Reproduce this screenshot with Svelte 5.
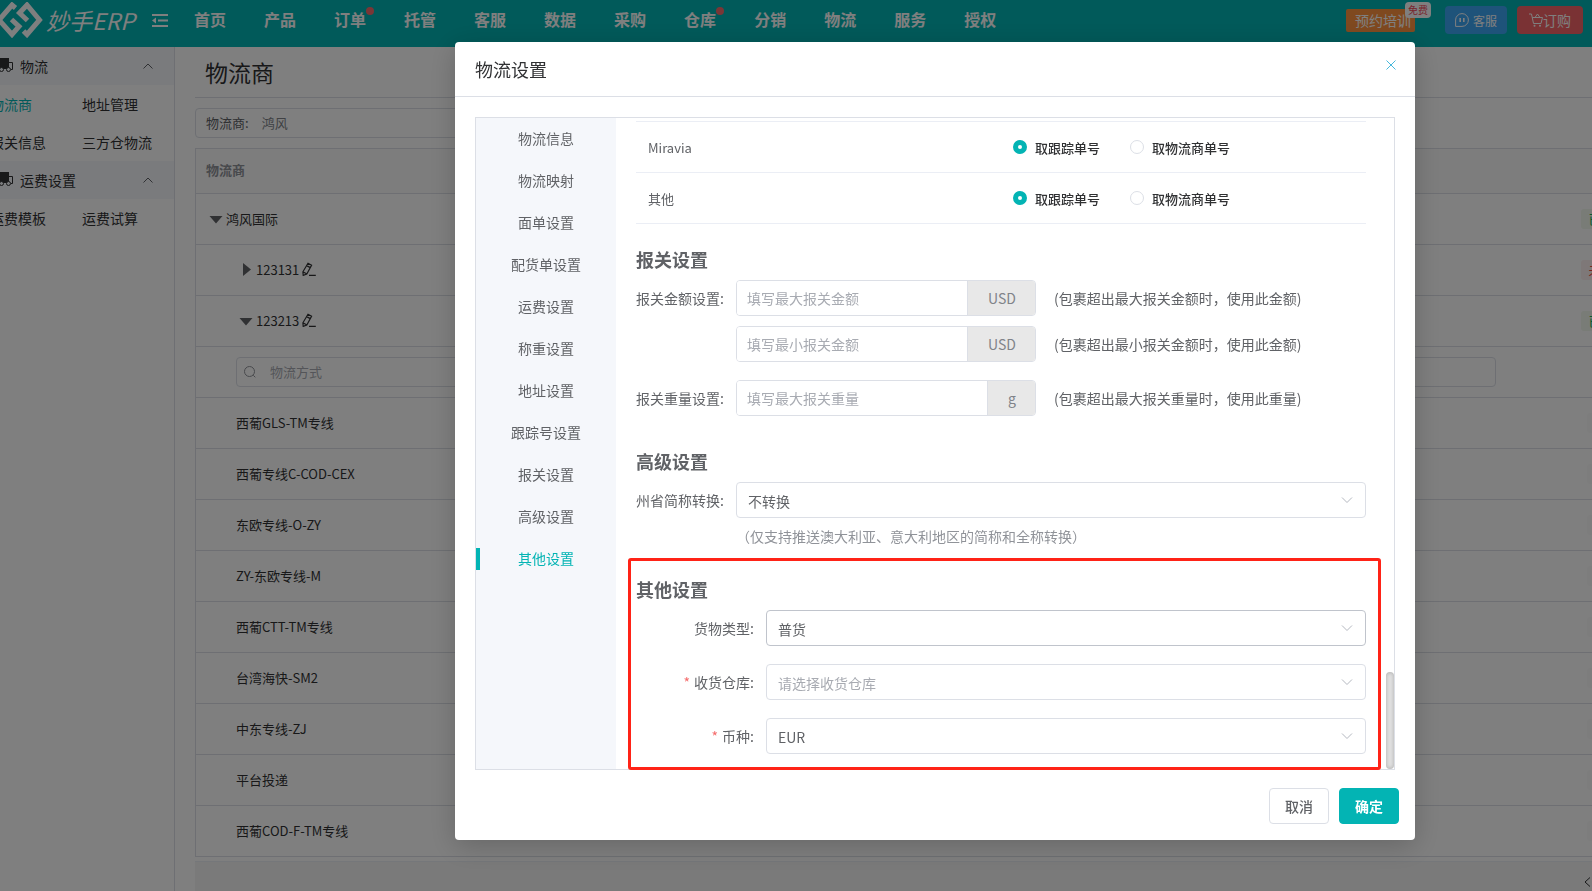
<script>
  const navs = [
    { name: '首页' },
    { name: '产品' },
    { name: '订单', dot: true },
    { name: '托管' },
    { name: '客服' },
    { name: '数据' },
    { name: '采购' },
    { name: '仓库', dot: true },
    { name: '分销' },
    { name: '物流' },
    { name: '服务' },
    { name: '授权' }
  ]

  const menus = [
    { title: '物流', items: ['物流商', '地址管理', '报关信息', '三方仓物流'] },
    { title: '运费设置', items: ['运费模板', '运费试算'] }
  ]

  const methods = [
    '西葡GLS-TM专线',
    '西葡专线C-COD-CEX',
    '东欧专线-O-ZY',
    'ZY-东欧专线-M',
    '西葡CTT-TM专线',
    '台湾海快-SM2',
    '中东专线-ZJ',
    '平台投递',
    '西葡COD-F-TM专线'
  ]

  const tabs = [
    '物流信息',
    '物流映射',
    '面单设置',
    '配货单设置',
    '运费设置',
    '称重设置',
    '地址设置',
    '跟踪号设置',
    '报关设置',
    '高级设置',
    '其他设置'
  ]

  let activeTab = $state('其他设置')
  let visible = $state(true)
  let platforms = $state([
    { name: 'Miravia', value: 'track' },
    { name: '其他', value: 'track' }
  ])
  let form = $state({
    maxAmount: '',
    minAmount: '',
    maxWeight: '',
    province: '不转换',
    goods: '普货',
    warehouse: '',
    currency: 'EUR'
  })

  const close = () => {
    visible = false
  }
</script>

{#snippet arrow()}
  <svg class="arrow" width="12" height="12" viewBox="0 0 12 12" aria-hidden="true">
    <path d="M1 3.5l5 5 5-5" fill="none" stroke="#b4b8c0" />
  </svg>
{/snippet}

{#snippet caret(open)}
  <svg class="caret" width="14" height="14" viewBox="0 0 14 14" aria-hidden="true">
    <path d={open ? 'M.5 5h13l-6.500 7.500z' : 'M4 1v13l8-6.500z'} fill="#606266" />
  </svg>
{/snippet}

{#snippet pen()}
  <svg class="pen" width="14" height="14" viewBox="0 0 14 14" aria-hidden="true">
    <path d="M6 1.2l3.6 2L4.8 12 1.2 13.4.9 9.8zM4.6 3.6l3.7 2M.9 9.8l3.6 2M7 13.3h6.8" fill="none" stroke="#303133" stroke-width="1.2" />
  </svg>
{/snippet}

<div class="page">
  <header class="header">
    <a class="logo" href="#home" aria-label="妙手ERP">
      <svg width="43" height="36" viewBox="0 0 43 36" aria-hidden="true">
        <path d="M15.500 6L12 3-1 18l13 14.500 7-8-7.500-7" fill="none" stroke="#fff" stroke-width="5" />
        <path d="M23.500 29l3.500 3.500L39.500 18 27 3l-7.500 8 8 7.500" fill="none" stroke="#fff" stroke-width="5" />
      </svg>
      <span>妙手ERP</span>
    </a>
    <button class="fold" aria-label="收起菜单">
      <svg width="16" height="13" viewBox="0 0 16 13" aria-hidden="true">
        <path d="M0 1h16M6 6.500h10M0 12h16" stroke="#fff" stroke-width="2" />
        <path d="M4 3.500v6L0 6.500z" fill="#fff" />
      </svg>
    </button>
    <nav class="nav">
      {#each navs as nav}
        <a href="#nav">{nav.name}{#if nav.dot}<i class="dot"></i>{/if}</a>
      {/each}
    </nav>
    <div class="actions">
      <button class="train">预约培训<span class="free">免费</span></button>
      <button class="service">
        <svg width="14" height="14" viewBox="0 0 14 14" aria-hidden="true">
          <path d="M.6 13.400V7A6.400 6.400 0 1 1 7 13.400z" fill="none" stroke="#fff" />
          <path d="M5.200 5v4M8.800 5v4" stroke="#fff" stroke-width="1.600" />
        </svg>
        客服
      </button>
      <button class="order">
        <svg width="14" height="14" viewBox="0 0 14 14" aria-hidden="true">
          <path d="M0 1h2.500l2 9.500h7.500l1.500-6H3.300M6 4.500l2.500-3.500L11 4.500" fill="none" stroke="#fff" />
          <circle cx="5.500" cy="12.800" r="1" fill="#fff" />
          <circle cx="11" cy="12.800" r="1" fill="#fff" />
        </svg>订购
      </button>
    </div>
  </header>

  <div class="body">
    <aside class="aside">
      {#each menus as menu}
        <button class="menu-title">
          <svg width="26" height="16" viewBox="0 0 26 16" aria-hidden="true">
            <path d="M3 0h19v11H3z" fill="#303133" />
            <path d="M22 4.500h3.500v7H24" fill="none" stroke="#303133" />
            <circle cx="14.500" cy="11.500" r="2" fill="#f5f7fa" stroke="#303133" />
            <circle cx="21.500" cy="11.500" r="2" fill="#f5f7fa" stroke="#303133" />
          </svg>
          <span>{menu.title}</span>
          <svg width="10" height="6" viewBox="0 0 10 6" aria-hidden="true">
            <path d="M.5 5.500L5 1l4.500 4.500" fill="none" stroke="#606266" />
          </svg>
        </button>
        <div class="menu-items">
          {#each menu.items as item}
            <a href="#menu" class:current={item === '物流商'}>{item}</a>
          {/each}
        </div>
      {/each}
    </aside>

    <main class="main">
      <h1>物流商</h1>
      <div class="filter"><label for="provider">物流商:</label><input id="provider" value="鸿风" /></div>
      <table class="list">
        <thead>
          <tr><th>物流商</th><th class="status"></th></tr>
        </thead>
        <tbody>
          <tr>
            <td><div class="node">{@render caret(true)}鸿风国际</div></td>
            <td class="status"><span class="tag green">已授权</span></td>
          </tr>
          <tr>
            <td><div class="node child">{@render caret(false)}123131{@render pen()}</div></td>
            <td class="status"><span class="tag red">未授权</span></td>
          </tr>
          <tr>
            <td><div class="node child">{@render caret(true)}123213{@render pen()}</div></td>
            <td class="status"><span class="tag green">已授权</span></td>
          </tr>
          <tr>
            <td class="search-cell" colspan="2">
              <div class="search">
                <svg width="12" height="12" viewBox="0 0 12 12" aria-hidden="true">
                  <path d="M9.300 9.300l2 2M10.500 5.500a5 5 0 1 1-10 0 5 5 0 0 1 10 0z" fill="none" stroke="#909399" />
                </svg>
                <input placeholder="物流方式" aria-label="物流方式" />
              </div>
            </td>
          </tr>
          {#each methods as method}
            <tr>
              <td class="method">{method}</td>
              <td class="status"><span class="tag gray"></span></td>
            </tr>
          {/each}
        </tbody>
      </table>
      <div class="pager">
        <button aria-label="上一页">
          <svg width="8" height="10" viewBox="0 0 8 10" aria-hidden="true">
            <path d="M6 .5L1 5l5 4.500" fill="none" stroke="#303133" />
          </svg>
        </button>
      </div>
    </main>
  </div>
</div>

{#if visible}
  <div class="mask">
    <div class="dialog" role="dialog" aria-label="物流设置">
      <div class="dialog-header">
        <h2>物流设置</h2>
        <button class="close" aria-label="关闭" onclick={close}>
          <svg width="10" height="10" viewBox="0 0 10 10" aria-hidden="true">
            <path d="M.5.5l9 9M9.500.5l-9 9" fill="none" stroke="#46b8dc" />
          </svg>
        </button>
      </div>

      <div class="panel">
        <div class="tabs">
          {#each tabs as tab}
            <button class:active={activeTab === tab} onclick={() => (activeTab = tab)}>{tab}</button>
          {/each}
        </div>

        <div class="content">
          <table class="platforms">
            <tbody>
              {#each platforms as platform, i}
                <tr>
                  <td>{platform.name}</td>
                  <td>
                    <div class="radios">
                      <label><input type="radio" name="platform{i}" value="track" bind:group={platform.value} />取跟踪单号</label>
                      <label><input type="radio" name="platform{i}" value="provider" bind:group={platform.value} />取物流商单号</label>
                    </div>
                  </td>
                </tr>
              {/each}
            </tbody>
          </table>

          <section class="customs">
            <h3>报关设置</h3>
            <div class="row">
              <label for="max-amount">报关金额设置:</label>
              <div class="group"><input id="max-amount" placeholder="填写最大报关金额" bind:value={form.maxAmount} /><span>USD</span></div>
              <p>(包裹超出最大报关金额时，使用此金额)</p>
            </div>
            <div class="row near">
              <label for="min-amount" aria-label="最小报关金额"></label>
              <div class="group"><input id="min-amount" placeholder="填写最小报关金额" bind:value={form.minAmount} /><span>USD</span></div>
              <p>(包裹超出最小报关金额时，使用此金额)</p>
            </div>
            <div class="row">
              <label for="max-weight">报关重量设置:</label>
              <div class="group"><input id="max-weight" placeholder="填写最大报关重量" bind:value={form.maxWeight} /><span>g</span></div>
              <p>(包裹超出最大报关重量时，使用此重量)</p>
            </div>
          </section>

          <section>
            <h3>高级设置</h3>
            <div class="row">
              <label for="province">州省简称转换:</label>
              <div class="select">
                <select id="province" bind:value={form.province}><option>不转换</option></select>
                {@render arrow()}
              </div>
            </div>
            <p class="tip">（仅支持推送澳大利亚、意大利地区的简称和全称转换）</p>
          </section>

          <section class="other">
            <h3>其他设置</h3>
            <div class="row">
              <label for="goods">货物类型:</label>
              <div class="select hover">
                <select id="goods" bind:value={form.goods}><option>普货</option></select>
                {@render arrow()}
              </div>
            </div>
            <div class="row">
              <label class="required" for="warehouse">收货仓库:</label>
              <div class="select">
                <select id="warehouse" class:empty={!form.warehouse} bind:value={form.warehouse}><option value="">请选择收货仓库</option></select>
                {@render arrow()}
              </div>
            </div>
            <div class="row">
              <label class="required" for="currency">币种:</label>
              <div class="select">
                <select id="currency" bind:value={form.currency}><option>EUR</option></select>
                {@render arrow()}
              </div>
            </div>
          </section>
        </div>
        <div class="thumb"></div>
      </div>

      <div class="dialog-footer">
        <button onclick={close}>取消</button>
        <button class="primary" onclick={close}>确定</button>
      </div>
    </div>
  </div>
{/if}

<style>
  :global(body) {
    margin: 0;
    overflow: hidden;
    font-family: "Noto Sans CJK SC", "Noto Sans", sans-serif;
    font-size: 14px;
    color: #303133;
  }

  * {
    box-sizing: border-box;
  }

  button,
  input,
  select {
    font: inherit;
    color: inherit;
    margin: 0;
  }

  button {
    padding: 0;
    border: none;
    background: none;
    cursor: pointer;
  }

  a {
    color: inherit;
    text-decoration: none;
  }

  h1,
  h2,
  h3,
  p {
    margin: 0;
    font-weight: normal;
  }

  svg {
    display: block;
    flex: none;
  }

  .page {
    display: flex;
    flex-direction: column;
    height: 100vh;
    overflow: hidden;
  }

  .header {
    display: flex;
    align-items: center;
    height: 47px;
    flex: none;
    padding-right: 9px;
    padding-bottom: 7px;
    background: #03b4b4;
    color: #fff;
  }

  .logo {
    display: flex;
    align-items: center;
    gap: 3px;
    width: 152px;
    font-size: 23px;
    font-style: italic;
    white-space: nowrap;
  }

  .fold {
    margin-right: 26px;
  }

  .nav {
    display: flex;
    gap: 38px;
    padding-bottom: 2px;
    font-size: 16px;
    font-weight: bold;
    white-space: nowrap;
  }

  .nav a {
    position: relative;
  }

  .dot {
    position: absolute;
    top: 0;
    right: -8px;
    width: 8px;
    height: 8px;
    border-radius: 50%;
    background: #f56c6c;
  }

  .actions {
    display: flex;
    align-items: center;
    margin-left: auto;
  }

  .train {
    position: relative;
    width: 69px;
    height: 23px;
    margin-right: 30px;
    padding-left: 5px;
    border-radius: 2px;
    background: #ff933f;
    line-height: 22px;
    white-space: nowrap;
  }

  .free {
    position: absolute;
    top: -7px;
    right: -16px;
    width: 26px;
    height: 16px;
    border-radius: 4px;
    background: #fff;
    color: #f0485a;
    font-size: 10px;
    line-height: 16px;
  }

  .service,
  .order {
    display: flex;
    align-items: center;
    justify-content: center;
    height: 28px;
    border-radius: 4px;
  }

  .service {
    gap: 4px;
    width: 62px;
    margin-right: 10px;
    background: #3da6f5;
    font-size: 12px;
  }

  .order {
    width: 66px;
    background: #f56468;
  }

  .body {
    display: flex;
    flex: 1;
    min-height: 0;
  }

  .aside {
    width: 201px;
    flex: none;
    margin-left: -26px;
    border-right: 1px solid #dcdfe6;
  }

  .menu-title {
    display: flex;
    align-items: center;
    width: 100%;
    height: 38px;
    padding: 0 21px 0 13px;
    background: #f5f7fa;
  }

  .menu-title span {
    flex: 1;
    margin-left: 7px;
    text-align: left;
  }

  .menu-items {
    display: grid;
    grid-template-columns: 1fr 1fr;
    padding-left: 16px;
    line-height: 38px;
  }

  .current {
    color: #03b4b4;
  }

  .main {
    display: flex;
    flex-direction: column;
    flex: 1;
    min-width: 0;
    padding-left: 20px;
    overflow: hidden;
  }

  h1 {
    padding-left: 10px;
    border-bottom: 1px solid #dcdfe6;
    font-size: 23px;
    line-height: 50px;
  }

  .filter {
    display: flex;
    align-items: center;
    width: 360px;
    height: 30px;
    margin: 10px 0;
    padding: 0 10px 2px;
    border: 1px solid #dcdfe6;
    border-radius: 4px;
    color: #606266;
    font-size: 13px;
  }

  .filter input {
    flex: 1;
    padding: 0 0 0 13px;
    border: none;
    background: none;
    outline: none;
    color: #808389;
  }

  .list {
    flex: none;
    width: calc(100% + 72px);
    border-collapse: separate;
    border-spacing: 0;
    border-top: 1px solid #dcdfe6;
    border-left: 1px solid #dcdfe6;
    font-size: 13px;
    table-layout: fixed;
  }

  .list th {
    height: 45px;
    padding: 0 10px 4px;
    border-bottom: 1px solid #dcdfe6;
    background: #fafafb;
    color: #909399;
    font-weight: bold;
    text-align: left;
  }

  .list td {
    height: 51px;
    padding: 0 10px 2px;
    border-bottom: 1px solid #dcdfe6;
  }

  .list .status {
    width: 112px;
    text-align: center;
  }

  .list .method {
    padding-left: 40px;
  }

  .list .search-cell {
    padding-bottom: 0;
  }

  .node {
    display: flex;
    align-items: center;
    padding-left: 3px;
  }

  .child {
    padding-left: 33px;
  }

  .caret {
    margin-right: 3px;
  }

  .pen {
    margin-left: 3px;
  }

  .tag {
    display: inline-block;
    min-width: 42px;
    height: 20px;
    padding: 0 7px;
    border-radius: 3px;
    line-height: 20px;
    vertical-align: middle;
  }

  .green {
    background: #f2f9ee;
    color: #13b35c;
  }

  .red {
    background: #fdf0f0;
    color: #f0483c;
  }

  .gray {
    background: #fafafb;
  }

  .search {
    display: flex;
    align-items: center;
    height: 30px;
    margin: 0 158px 0 30px;
    padding: 0 7px;
    border: 1px solid #dcdfe6;
    border-radius: 4px;
  }

  .search input {
    flex: 1;
    padding: 0 14px 2px;
    border: none;
    background: none;
    outline: none;
  }

  .pager {
    display: flex;
    justify-content: flex-end;
    flex: 1;
    margin-top: 4px;
    padding-top: 15px;
    border-top: 1px solid #ebeef5;
    background: #f4f4f4;
  }

  .pager button {
    height: 10px;
  }

  .mask {
    position: fixed;
    inset: 0;
    display: flex;
    align-items: flex-start;
    justify-content: flex-end;
    padding: 42px 177px 0 20px;
    background: rgba(0, 0, 0, 0.5);
  }

  .dialog {
    flex: 1;
    max-width: 960px;
    border-radius: 4px;
    background: #fff;
    box-shadow: 0 6px 28px rgba(0, 0, 0, 0.2);
    color: #606266;
  }

  .dialog-header {
    display: flex;
    justify-content: space-between;
    padding: 0 19px 0 20px;
    border-bottom: 1px solid #dcdfe6;
  }

  h2 {
    color: #303133;
    font-size: 18px;
    line-height: 54px;
  }

  .close {
    align-self: flex-start;
    margin-top: 18px;
  }

  .panel {
    position: relative;
    display: flex;
    margin: 20px 20px 18px;
    border: 1px solid #dcdfe6;
  }

  .tabs {
    display: flex;
    flex-direction: column;
    width: 140px;
    background: #f5f7fb;
  }

  .tabs button {
    position: relative;
    height: 42px;
    padding-bottom: 2px;
  }

  .tabs .active {
    color: #03b4b4;
  }

  .tabs .active::before {
    content: '';
    position: absolute;
    top: 10px;
    left: 0;
    width: 4px;
    height: 22px;
    background: #03b4b4;
  }

  .content {
    flex: 1;
    padding: 3px 28px 15px 20px;
  }

  .platforms {
    width: 100%;
    border-collapse: separate;
    border-spacing: 0;
    border-top: 1px solid #ebeef5;
    font-size: 13px;
    table-layout: fixed;
  }

  .platforms td {
    height: 51px;
    padding: 0 12px;
    border-bottom: 1px solid #ebeef5;
  }

  .radios {
    display: flex;
    gap: 30px;
    color: #303133;
    font-weight: 500;
  }

  .radios label {
    display: flex;
    align-items: center;
    gap: 8px;
    white-space: nowrap;
  }

  .radios input {
    width: 14px;
    height: 14px;
    border: 1px solid #dcdfe6;
    border-radius: 50%;
    background: #fff;
    appearance: none;
  }

  .radios input:checked {
    border: 5px solid #03b4b4;
  }

  section {
    position: relative;
    margin-top: 24px;
  }

  .customs {
    margin-bottom: 34px;
  }

  h3 {
    margin-bottom: 10px;
    font-size: 18px;
    font-weight: bold;
    line-height: 22px;
  }

  .row {
    display: flex;
    line-height: 36px;
  }

  .row + .row {
    margin-top: 18px;
  }

  .row + .near {
    margin-top: 10px;
  }

  .row label {
    width: 100px;
    flex: none;
    padding-right: 12px;
    text-align: right;
    white-space: nowrap;
  }

  .other label {
    width: 130px;
  }

  .required::before {
    content: '*';
    margin-right: 4px;
    color: #f56c6c;
  }

  .group {
    display: flex;
    width: 300px;
    height: 36px;
    border: 1px solid #dcdfe6;
    border-radius: 4px;
    overflow: hidden;
  }

  .group input {
    flex: 1;
    min-width: 0;
    padding: 0 10px;
    border: none;
    outline: none;
  }

  input::placeholder {
    color: #a8abb2;
    opacity: 1;
  }

  .group span {
    padding: 0 19px 0 20px;
    border-left: 1px solid #dcdfe6;
    background: #e8e8e8;
    color: #808389;
    line-height: 34px;
  }

  .row p {
    margin-left: 18px;
  }

  .tip {
    padding-left: 100px;
    color: #909399;
    line-height: 36px;
  }

  .select {
    position: relative;
    flex: 1;
  }

  select {
    width: 100%;
    height: 36px;
    padding: 0 30px 2px 11px;
    border: 1px solid #dcdfe6;
    border-radius: 4px;
    background: #fff;
    appearance: none;
    display: block;
  }

  select.empty {
    color: #a8abb2;
  }

  .hover select {
    border-color: #c0c4cc;
  }

  .arrow {
    position: absolute;
    top: 12px;
    right: 13px;
    pointer-events: none;
  }

  .other::after {
    content: '';
    position: absolute;
    inset: -20px -15px -16px -8px;
    border: 3px solid #ff2317;
    border-radius: 3px;
    pointer-events: none;
  }

  .thumb {
    position: absolute;
    right: 0;
    bottom: 0;
    width: 8px;
    height: 97px;
    border-radius: 4px;
    background: #e2e2e2;
    box-shadow: inset 0 0 4px rgba(0, 0, 0, 0.25);
  }

  .dialog-footer {
    display: flex;
    justify-content: flex-end;
    gap: 10px;
    padding: 0 16px 16px;
  }

  .dialog-footer button {
    width: 60px;
    height: 36px;
    border: 1px solid #dcdfe6;
    border-radius: 4px;
    font-weight: 500;
  }

  .dialog-footer .primary {
    border-color: #03b4b4;
    background: #03b4b4;
    color: #fff;
    font-weight: bold;
  }
</style>
